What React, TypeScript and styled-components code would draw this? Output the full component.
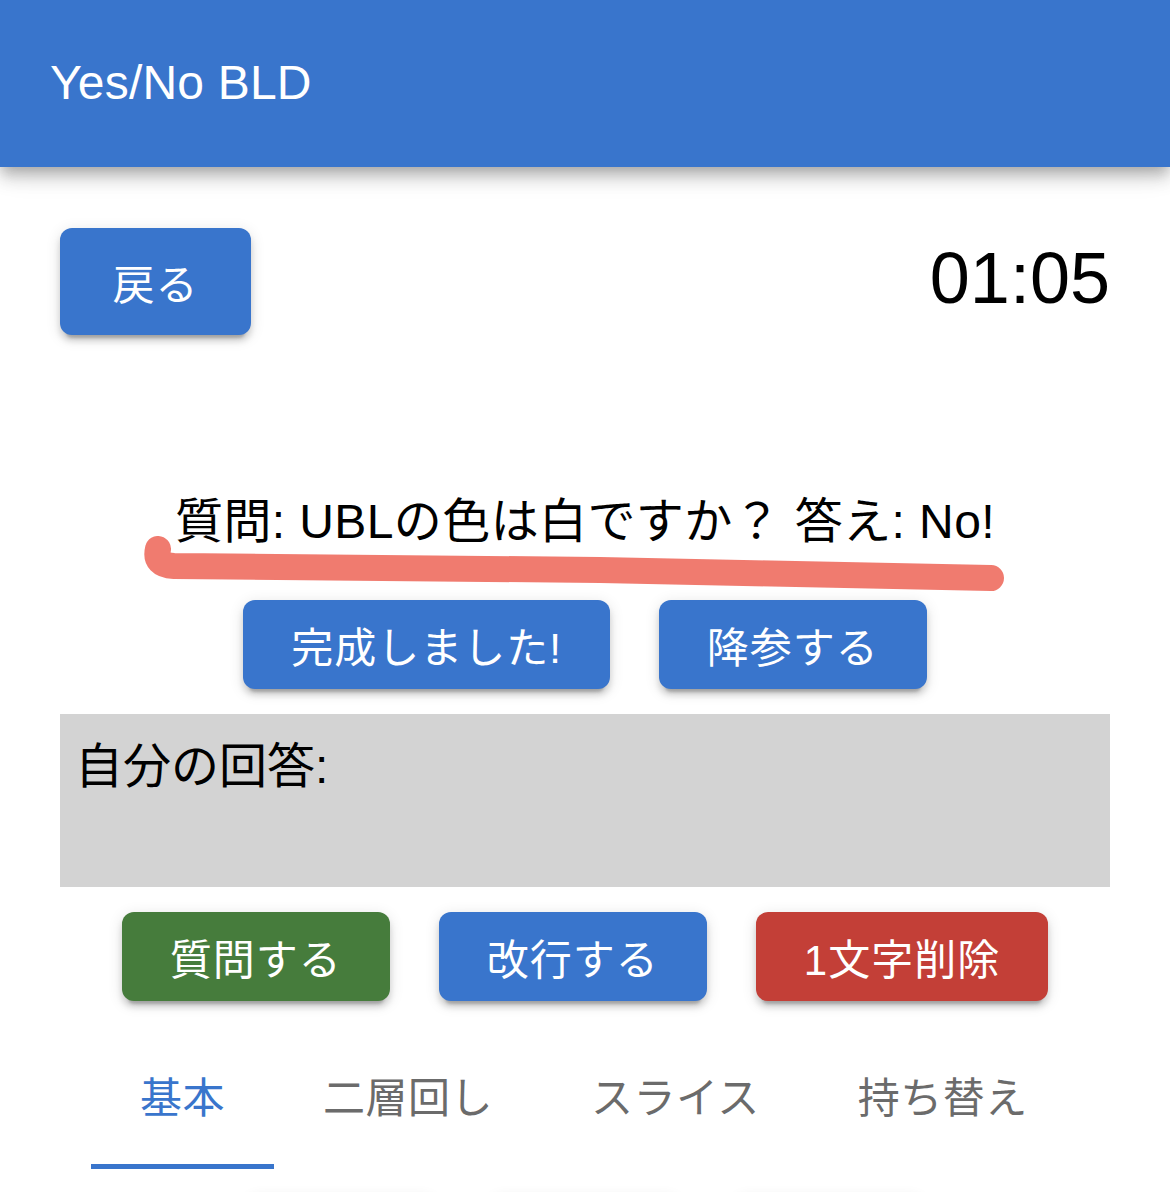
import styled, { createGlobalStyle } from 'styled-components'

const GlobalStyle = createGlobalStyle`
  html, body {
    margin: 0;
    padding: 0;
    background: #ffffff;
  }
  body {
    font-family: "Liberation Sans", "Noto Sans CJK JP", sans-serif;
    color: #000000;
  }
  * {
    box-sizing: border-box;
  }
`

type Tone = 'blue' | 'green' | 'red'

const toneColors: Record<Tone, string> = {
  blue: '#3975cc',
  green: '#467c3c',
  red: '#c33f37',
}

const buttonShadow =
  '0 9px 3px -6px rgba(0,0,0,0.2), 0 6px 6px 0 rgba(0,0,0,0.14), 0 3px 15px 0 rgba(0,0,0,0.12)'

export default function App() {
  return (
    <>
      <GlobalStyle />
      <AppBar>
        <Title>Yes/No BLD</Title>
      </AppBar>

      <Main>
        <TopRow>
          <BackButton>戻る</BackButton>
          <Timer>01:05</Timer>
        </TopRow>

        <QuestionBlock>
          <QuestionText>質問: UBLの色は白ですか？ 答え: No!</QuestionText>
          {/* hand-drawn red underline */}
          <Underline viewBox="0 0 870 60" width="870" height="60">
            <path
              d="M 18 14 Q 14 30 34 31 L 460 35 L 851 43"
              fill="none"
              stroke="#f07468"
              strokeWidth="26"
              strokeLinecap="round"
              strokeLinejoin="round"
            />
          </Underline>
        </QuestionBlock>

        <ButtonRow>
          <ActionButton $tone="blue">完成しました!</ActionButton>
          <ActionButton $tone="blue">降参する</ActionButton>
        </ButtonRow>

        <AnswerBox>自分の回答:</AnswerBox>

        <ButtonRow>
          <ActionButton $tone="green">質問する</ActionButton>
          <ActionButton $tone="blue">改行する</ActionButton>
          <ActionButton $tone="red">1文字削除</ActionButton>
        </ButtonRow>

        <Tabs>
          <Tab $active>基本</Tab>
          <Tab>二層回し</Tab>
          <Tab>スライス</Tab>
          <Tab>持ち替え</Tab>
        </Tabs>

        {/* next row of move buttons, just below the fold */}
        <MoveRow>
          <MoveButton aria-label="U" />
          <MoveButton aria-label="U'" />
          <MoveButton aria-label="U2" />
        </MoveRow>
      </Main>
    </>
  )
}

const AppBar = styled.header`
  height: 167px;
  background: #3975cc;
  display: flex;
  align-items: center;
  padding: 0 50px 2px;
  box-shadow: 0 6px 12px -3px rgba(0,0,0,0.2), 0 12px 15px 0 rgba(0,0,0,0.14), 0 3px 30px 0 rgba(0,0,0,0.12);
  position: relative;
  z-index: 2;
`

const Title = styled.h1`
  margin: 0;
  font-size: 48px;
  font-weight: 400;
  color: #ffffff;
  letter-spacing: 0.2px;
`

const Main = styled.main`
  padding: 61px 60px 0;
  display: flex;
  flex-direction: column;
`

const TopRow = styled.div`
  display: flex;
  justify-content: space-between;
  align-items: flex-start;
`

const BaseButton = styled.button`
  border: none;
  border-radius: 12px;
  color: #ffffff;
  font-family: "Liberation Sans", "Noto Sans CJK JP", sans-serif;
  font-size: 42px;
  font-weight: 400;
  letter-spacing: 1px;
  display: flex;
  align-items: center;
  justify-content: center;
  box-shadow: ${buttonShadow};
  cursor: pointer;
`

const BackButton = styled(BaseButton)`
  width: 191px;
  height: 107px;
  background: #3975cc;
`

const Timer = styled.div`
  font-size: 72px;
  line-height: 1;
  padding-top: 14px;
  color: #000000;
`

const QuestionBlock = styled.div`
  position: relative;
  margin-top: 151px;
  height: 114px;
  display: flex;
  justify-content: center;
`

const QuestionText = styled.div`
  font-size: 48px;
  line-height: 72px;
  height: 72px;
  position: relative;
  z-index: 1;
  letter-spacing: 0.4px;
`

const Underline = styled.svg`
  position: absolute;
  left: 80px;
  top: 49px;
  opacity: 0.95;
  filter: blur(0.7px);
`

const ButtonRow = styled.div`
  display: flex;
  justify-content: center;
  gap: 49px;
`

const ActionButton = styled(BaseButton)<{ $tone: Tone }>`
  height: 89px;
  padding: 0 48px;
  background: ${p => toneColors[p.$tone]};
`

const AnswerBox = styled.div`
  margin: 25px 0;
  height: 173px;
  background: #d3d3d3;
  padding: 17px 15px;
  font-size: 48px;
  line-height: 72px;
`

const Tabs = styled.nav`
  display: flex;
  margin-top: 24px;
  padding-left: 31px;
`

const Tab = styled.div<{ $active?: boolean }>`
  height: 144px;
  padding: 0 49px;
  display: flex;
  align-items: center;
  font-size: 42px;
  letter-spacing: 0.5px;
  color: ${p => (p.$active ? '#3975cc' : '#6b6b6b')};
  border-bottom: 5px solid ${p => (p.$active ? '#3975cc' : 'transparent')};
`

const MoveRow = styled.div`
  display: flex;
  justify-content: center;
  gap: 56px;
  margin-top: 27px;
  padding-bottom: 40px;
`

const MoveButton = styled(BaseButton)`
  width: 188px;
  height: 89px;
  background: #ffffff;
`
